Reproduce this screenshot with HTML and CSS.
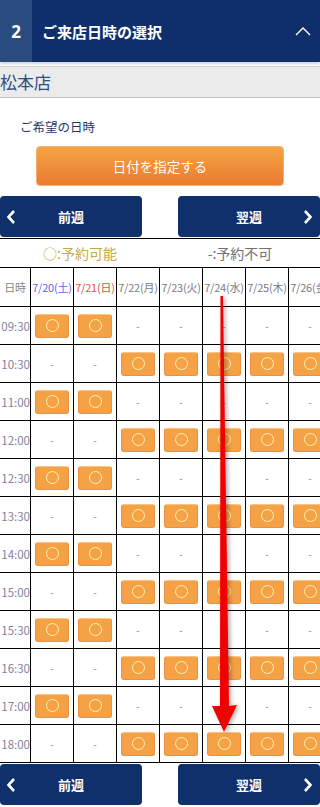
FILE: index.html
```html
<!DOCTYPE html>
<html lang="ja">
  <head>
    <meta charset="UTF-8" />
    <meta name="viewport" content="width=device-width, initial-scale=1.0" />
    <title>ご来店日時の選択</title>
    <link rel="stylesheet" href="styles.css">
  </head>
  <body>
    <div class="page">
      <div class="step-header">
        <div class="step-num">2</div>
        <div class="step-title">ご来店日時の選択</div>
        <svg class="step-toggle" width="16" height="10" viewBox="0 0 16 10">
          <polyline points="1,9 8,2 15,9" fill="none" stroke="white" stroke-width="1.4" />
        </svg>
      </div>

      <div class="shop-name">松本店</div>

      <div class="wish-label">ご希望の日時</div>
      <div class="date-button">日付を指定する</div>

      <div class="week-nav">
        <div class="week-btn prev">
          <svg class="arrow" width="10" height="16" viewBox="0 0 10 16">
            <polyline points="8,2 2.5,8 8,14" fill="none" stroke="white" stroke-width="2.6" />
          </svg>
          前週
        </div>
        <div class="week-btn next">
          翌週
          <svg class="arrow" width="10" height="16" viewBox="0 0 10 16">
            <polyline points="2,2 7.5,8 2,14" fill="none" stroke="white" stroke-width="2.6" />
          </svg>
        </div>
      </div>

      <div class="legend">
        <div class="legend-ok">○:予約可能</div>
        <div class="legend-ng">-:予約不可</div>
      </div>

      <div class="schedule-wrap">
        <div class="schedule" id="schedule">
          <div class="cell head time-head">日時</div>
          <div class="cell head sat">7/20(土)</div>
          <div class="cell head sun">7/21(日)</div>
          <div class="cell head">7/22(月)</div>
          <div class="cell head">7/23(火)</div>
          <div class="cell head">7/24(水)</div>
          <div class="cell head">7/25(木)</div>
          <div class="cell head">7/26(金)</div>
        </div>
      </div>

      <div class="week-nav bottom">
        <div class="week-btn prev">
          <svg class="arrow" width="10" height="16" viewBox="0 0 10 16">
            <polyline points="8,2 2.5,8 8,14" fill="none" stroke="white" stroke-width="2.6" />
          </svg>
          前週
        </div>
        <div class="week-btn next">
          翌週
          <svg class="arrow" width="10" height="16" viewBox="0 0 10 16">
            <polyline points="2,2 7.5,8 2,14" fill="none" stroke="white" stroke-width="2.6" />
          </svg>
        </div>
      </div>

      <!-- annotation arrow drawn over the table -->
      <svg class="pointer-arrow" width="320" height="807" viewBox="0 0 320 807">
        <polygon points="220.5,296 223,296 229,706 237,705 224,732 212,706 220,706" fill="#f00000" />
      </svg>
    </div>

    <script>
      const times = ["09:30", "10:30", "11:00", "12:00", "12:30", "13:30",
                     "14:00", "15:00", "15:30", "16:30", "17:00", "18:00"];
      const schedule = document.getElementById("schedule");

      times.forEach(function (time, i) {
        const weekend = i % 2 === 0;
        let html = '<div class="cell time">' + time + "</div>";
        for (let d = 0; d < 7; d++) {
          const open = d < 2 ? weekend : !weekend;
          if (open) {
            html += '<div class="cell"><span class="slot"><span class="ring"></span></span></div>';
          } else {
            html += '<div class="cell"><span class="dash">-</span></div>';
          }
        }
        schedule.insertAdjacentHTML("beforeend", html);
      });
    </script>
  </body>
</html>
```

FILE: styles.css
```css
body {
  margin: 0;
  background-color: #fff;
  font-family: "Noto Sans CJK JP", "Noto Sans", sans-serif;
  overflow: hidden;
}

.page {
  position: relative;
  width: 320px;
  height: 807px;
  overflow: hidden;
}

.step-header {
  display: flex;
  align-items: center;
  height: 62px;
  background-color: #0e2f6b;
  color: #fff;
  box-shadow: 0 2px 3px rgba(0, 0, 0, 0.18);
}

.step-num {
  width: 32px;
  height: 62px;
  display: flex;
  align-items: center;
  justify-content: center;
  background-color: #294b7f;
  font-family: "Noto Sans", sans-serif;
  font-weight: 700;
  font-size: 17px;
}

.step-title {
  flex: 1;
  margin-left: 10px;
  font-weight: 700;
  font-size: 15px;
}

.step-toggle {
  margin-right: 9px;
}

.shop-name {
  margin-top: 4px;
  height: 30px;
  line-height: 30px;
  background-color: #ebebeb;
  border-top: 1px solid #cfcfcf;
  border-bottom: 1px solid #c4c4c4;
  color: #2d4f86;
  font-size: 17px;
}

.wish-label {
  margin-top: 20px;
  padding-left: 20px;
  line-height: 18px;
  font-size: 12.5px;
  color: #1c3764;
}

.date-button {
  margin: 10px 0 0 36px;
  width: 248px;
  height: 40px;
  box-sizing: border-box;
  display: flex;
  align-items: center;
  justify-content: center;
  border-radius: 4px;
  border: 1px solid #f3b072;
  background: linear-gradient(#f6a445, #ea7a2f);
  color: #fff;
  font-size: 13.5px;
}

.week-nav {
  display: flex;
  justify-content: space-between;
  margin-top: 10px;
}

.week-nav.bottom {
  margin-top: 1px;
}

.week-btn {
  position: relative;
  width: 142px;
  height: 41px;
  display: flex;
  align-items: center;
  justify-content: center;
  border-radius: 4px;
  background-color: #10306c;
  color: #fff;
  font-weight: 700;
  font-size: 13px;
}

.week-btn .arrow {
  position: absolute;
  top: 13px;
}

.week-btn.prev .arrow {
  left: 6px;
}

.week-btn.next .arrow {
  right: 7px;
}

.legend {
  display: flex;
  height: 28px;
  margin-top: 1px;
  border-top: 1px solid #000;
  border-bottom: 1px solid #000;
  font-size: 14px;
  align-items: center;
}

.legend-ok,
.legend-ng {
  flex: 1;
  text-align: center;
}

.legend-ok {
  color: #c8a64a;
}

.legend-ng {
  color: #707070;
}

.schedule-wrap {
  width: 320px;
  overflow: hidden;
}

.schedule {
  display: grid;
  grid-template-columns: 31px repeat(7, 43px);
  width: 332px;
}

.cell {
  box-sizing: border-box;
  height: 38px;
  border-right: 1px solid #000;
  border-bottom: 1px solid #000;
  display: flex;
  align-items: center;
  justify-content: center;
}

.cell.head {
  height: 39px;
  font-size: 11px;
  color: #7a7a8a;
  white-space: nowrap;
  letter-spacing: -0.2px;
}

.cell.head.sat {
  color: #6a5cf0;
}

.cell.head.sun {
  color: #f04848;
}

.cell.time-head {
  color: #888;
}

.cell.time {
  justify-content: flex-end;
  font-size: 11.5px;
  color: #8282a0;
  white-space: nowrap;
}

.dash {
  font-size: 11px;
  color: #9a9aa8;
}

.slot {
  width: 34px;
  height: 24px;
  box-sizing: border-box;
  display: flex;
  align-items: center;
  justify-content: center;
  border-radius: 3px;
  border: 1px solid #ea9244;
  border-top-color: #f8c488;
  background-color: #f5a246;
}

.ring {
  width: 11px;
  height: 11px;
  border-radius: 50%;
  border: 1.2px solid #fff3b4;
}

.pointer-arrow {
  position: absolute;
  top: 0;
  left: 0;
  pointer-events: none;
  filter: drop-shadow(2px 1px 2px rgba(0, 0, 0, 0.35));
}
```
